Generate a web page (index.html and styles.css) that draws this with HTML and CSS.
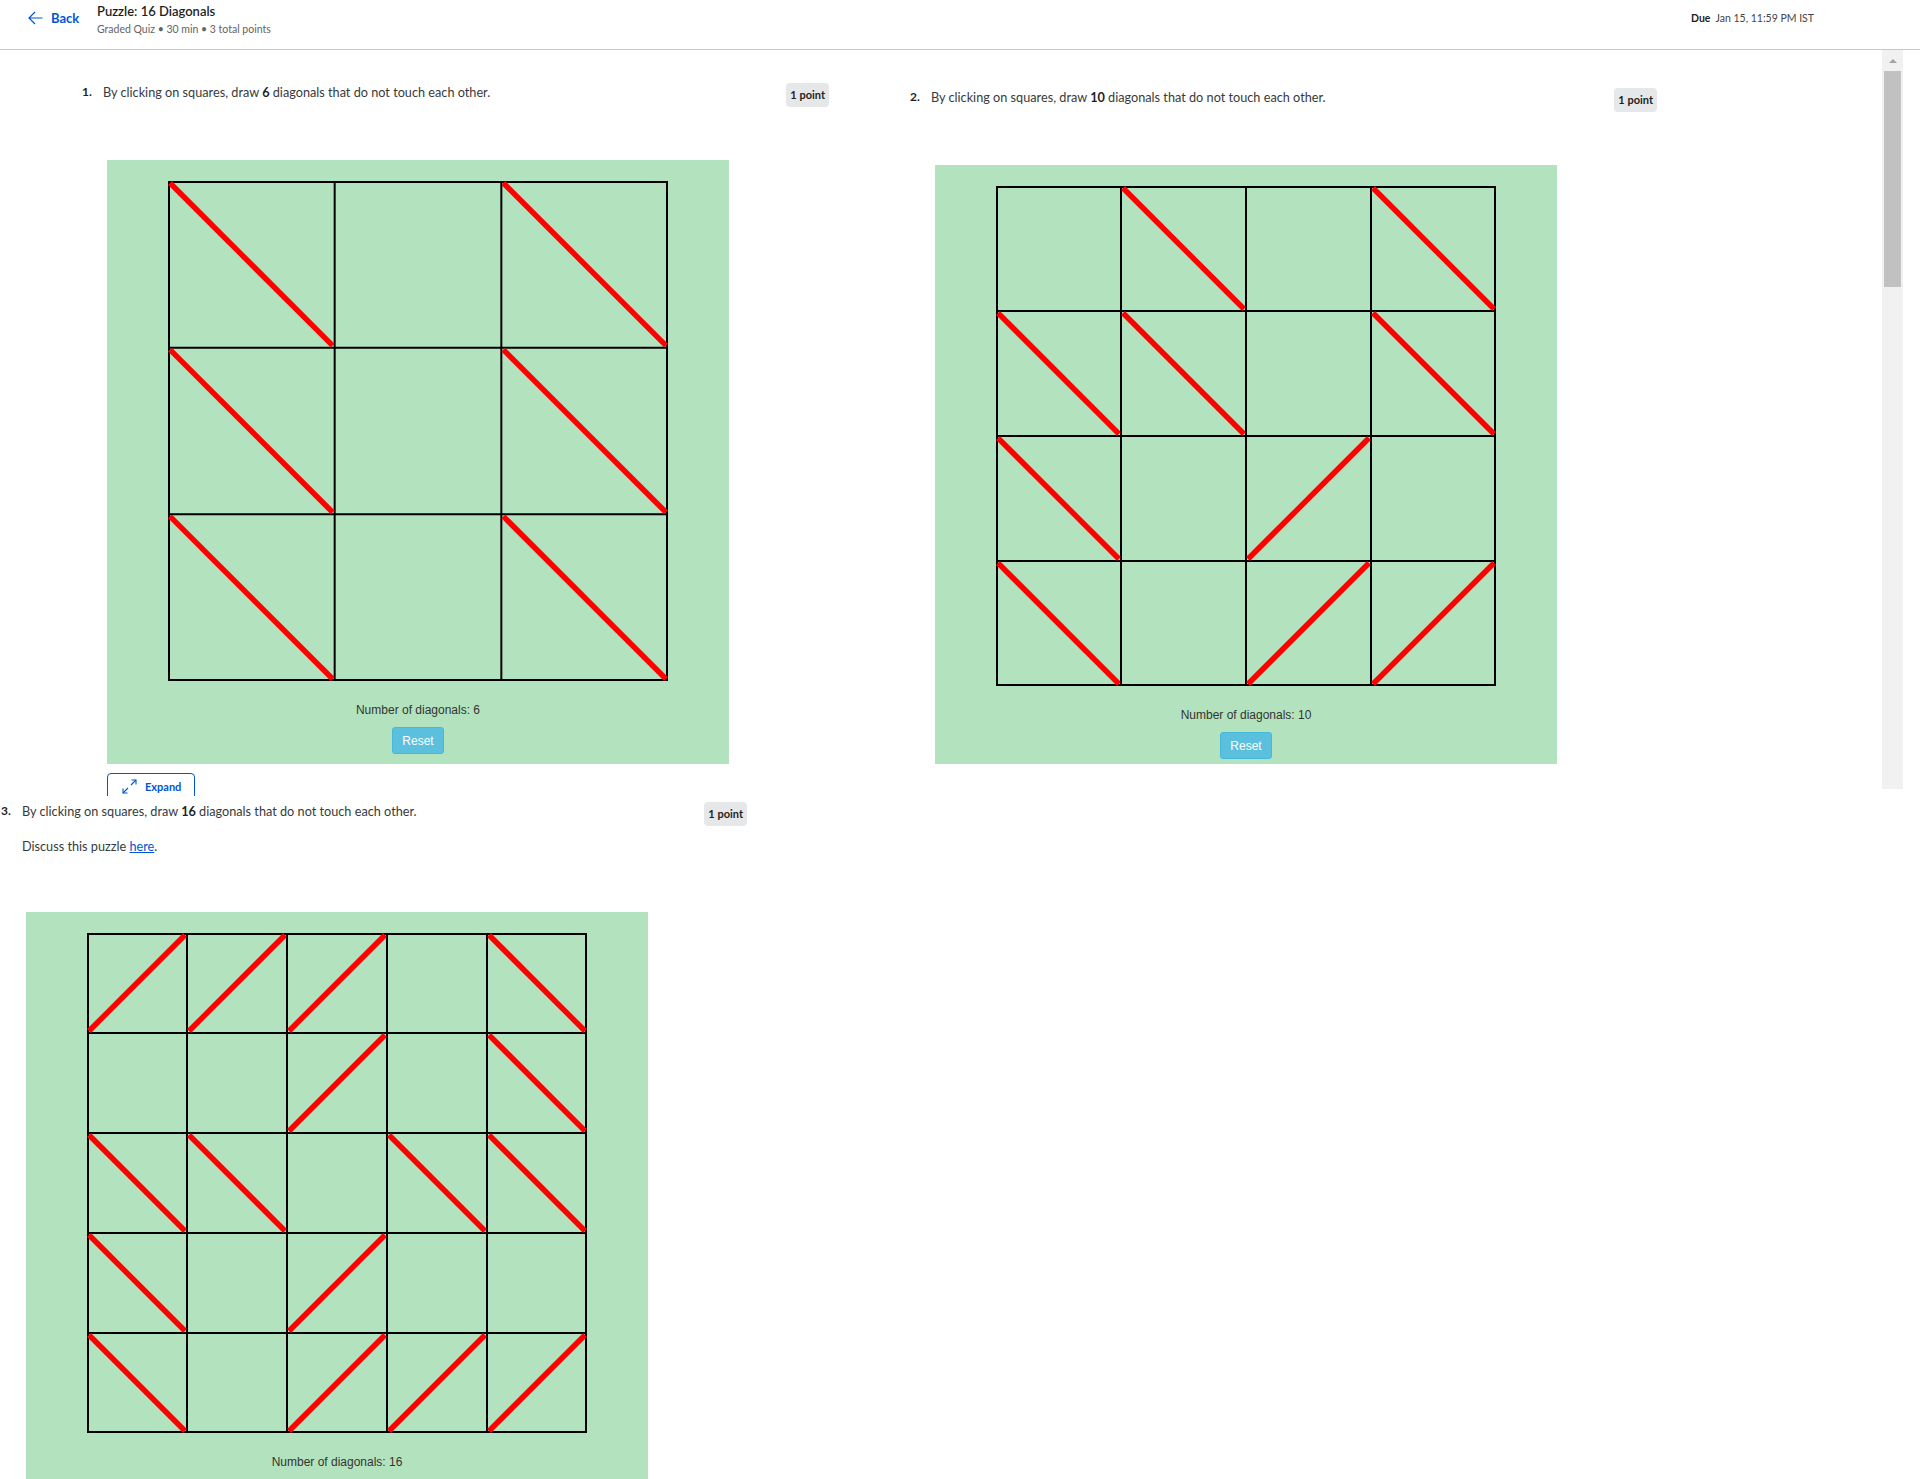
FILE: index.html
```html
<!DOCTYPE html>
<html lang="en">
<head>
<meta charset="utf-8">
<title>Puzzle: 16 Diagonals</title>
<link rel="stylesheet" href="styles.css">
</head>
<body>
<header class="topbar">
  <a class="back" href="#">
    <svg class="back-icon" width="15" height="14" viewBox="0 0 15 14"><path d="M14.5 7H1M7 1L1 7l6 6" fill="none" stroke="#0056d2" stroke-width="1.2"/></svg>
    <span>Back</span>
  </a>
  <div class="titles">
    <div class="title">Puzzle: 16 Diagonals</div>
    <div class="sub">Graded Quiz &bull; 30 min &bull; 3 total points</div>
  </div>
  <div class="due"><b>Due</b>&nbsp; Jan 15, 11:59 PM IST</div>
</header>

<main class="viewport">
  <div class="qrow">
    <section class="question">
      <div class="qhead">
        <span class="num">1.</span>
        <span class="qtext">By clicking on squares, draw <b>6</b> diagonals that do not touch each other.</span>
        <span class="badge">1 point</span>
      </div>
      <div class="board">
        <svg class="grid" width="500" height="500" viewBox="0 0 500 500">
          <g stroke="#000" stroke-width="2" fill="none">
            <rect x="1" y="1" width="498" height="498"/>
            <line x1="166.67" y1="0" x2="166.67" y2="500"/>
            <line x1="333.33" y1="0" x2="333.33" y2="500"/>
            <line x1="0" y1="166.67" x2="500" y2="166.67"/>
            <line x1="0" y1="333.33" x2="500" y2="333.33"/>
          </g>
          <g stroke="#ff0000" stroke-width="5.5">
            <line x1="2" y1="2" x2="164.67" y2="164.67"/>
            <line x1="335.33" y1="2" x2="498" y2="164.67"/>
            <line x1="2" y1="168.67" x2="164.67" y2="331.33"/>
            <line x1="335.33" y1="168.67" x2="498" y2="331.33"/>
            <line x1="2" y1="335.33" x2="164.67" y2="498"/>
            <line x1="335.33" y1="335.33" x2="498" y2="498"/>
          </g>
        </svg>
        <div class="count">Number of diagonals: 6</div>
        <button class="reset">Reset</button>
      </div>
      <button class="expand">
        <svg width="15" height="15" viewBox="0 0 15 15"><g fill="none" stroke="#0056d2" stroke-width="1.1"><path d="M1 14L6 9M9 6L14 1"/><path d="M9.5 1H14v4.5"/><path d="M1 9.5V14h4.5"/></g></svg>
        <span>Expand</span>
      </button>
    </section>

    <section class="question q2">
      <div class="qhead">
        <span class="num">2.</span>
        <span class="qtext">By clicking on squares, draw <b>10</b> diagonals that do not touch each other.</span>
        <span class="badge">1 point</span>
      </div>
      <div class="board board2">
        <svg class="grid" width="500" height="500" viewBox="0 0 500 500">
          <g stroke="#000" stroke-width="2" fill="none">
            <rect x="1" y="1" width="498" height="498"/>
            <line x1="125" y1="0" x2="125" y2="500"/>
            <line x1="250" y1="0" x2="250" y2="500"/>
            <line x1="375" y1="0" x2="375" y2="500"/>
            <line x1="0" y1="125" x2="500" y2="125"/>
            <line x1="0" y1="250" x2="500" y2="250"/>
            <line x1="0" y1="375" x2="500" y2="375"/>
          </g>
          <g stroke="#ff0000" stroke-width="5.5">
            <line x1="127" y1="2" x2="248" y2="123"/>
            <line x1="377" y1="2" x2="498" y2="123"/>
            <line x1="2" y1="127" x2="123" y2="248"/>
            <line x1="127" y1="127" x2="248" y2="248"/>
            <line x1="377" y1="127" x2="498" y2="248"/>
            <line x1="2" y1="252" x2="123" y2="373"/>
            <line x1="2" y1="377" x2="123" y2="498"/>
            <line x1="252" y1="373" x2="373" y2="252"/>
            <line x1="252" y1="498" x2="373" y2="377"/>
            <line x1="377" y1="498" x2="498" y2="377"/>
          </g>
        </svg>
        <div class="count">Number of diagonals: 10</div>
        <button class="reset">Reset</button>
      </div>
    </section>
  </div>

  <div class="vscroll" aria-hidden="true">
    <div class="vscroll-arrow"></div>
    <div class="vscroll-thumb"></div>
  </div>
</main>

<section class="question q3">
  <div class="qhead">
    <span class="num">3.</span>
    <span class="qtext">By clicking on squares, draw <b>16</b> diagonals that do not touch each other.</span>
    <span class="badge">1 point</span>
  </div>
  <p class="discuss">Discuss this puzzle <a href="#">here</a>.</p>
  <div class="board board3">
    <svg class="grid" width="500" height="500" viewBox="0 0 500 500">
      <g stroke="#000" stroke-width="2" fill="none">
        <rect x="1" y="1" width="498" height="498"/>
        <line x1="100" y1="0" x2="100" y2="500"/>
        <line x1="200" y1="0" x2="200" y2="500"/>
        <line x1="300" y1="0" x2="300" y2="500"/>
        <line x1="400" y1="0" x2="400" y2="500"/>
        <line x1="0" y1="100" x2="500" y2="100"/>
        <line x1="0" y1="200" x2="500" y2="200"/>
        <line x1="0" y1="300" x2="500" y2="300"/>
        <line x1="0" y1="400" x2="500" y2="400"/>
      </g>
      <g stroke="#ff0000" stroke-width="5.5">
        <line x1="2" y1="98" x2="98" y2="2"/>
        <line x1="102" y1="98" x2="198" y2="2"/>
        <line x1="202" y1="98" x2="298" y2="2"/>
        <line x1="402" y1="2" x2="498" y2="98"/>
        <line x1="202" y1="198" x2="298" y2="102"/>
        <line x1="402" y1="102" x2="498" y2="198"/>
        <line x1="2" y1="202" x2="98" y2="298"/>
        <line x1="102" y1="202" x2="198" y2="298"/>
        <line x1="302" y1="202" x2="398" y2="298"/>
        <line x1="402" y1="202" x2="498" y2="298"/>
        <line x1="2" y1="302" x2="98" y2="398"/>
        <line x1="202" y1="398" x2="298" y2="302"/>
        <line x1="2" y1="402" x2="98" y2="498"/>
        <line x1="202" y1="498" x2="298" y2="402"/>
        <line x1="302" y1="498" x2="398" y2="402"/>
        <line x1="402" y1="498" x2="498" y2="402"/>
      </g>
    </svg>
    <div class="count">Number of diagonals: 16</div>
  </div>
</section>
</body>
</html>
```

FILE: styles.css
```css
html, body {
  margin: 0;
  padding: 0;
  overflow: hidden;
  background: #ffffff;
}

body {
  font-family: Lato, "Open Sans", sans-serif;
  color: #1f1f1f;
}

/* ---------- top bar ---------- */
.topbar {
  display: flex;
  align-items: flex-start;
  height: 49px;
  border-bottom: 1px solid #c8c8c8;
  padding-left: 28px;
}

.back {
  display: flex;
  align-items: center;
  width: 69px;
  padding-top: 10px;
  line-height: 16px;
  text-decoration: none;
  color: #0056d2;
  font-size: 13px;
  font-weight: 700;
}

.back-icon {
  margin-right: 8px;
}

.titles {
  padding-top: 3px;
}

.title {
  font-size: 13px;
  line-height: 16px;
  font-weight: 600;
  color: #1f1f1f;
}

.sub {
  margin-top: 3px;
  font-size: 10.5px;
  line-height: 14px;
  color: #636363;
}

.due {
  margin-left: auto;
  margin-right: 106px;
  padding-top: 11px;
  font-size: 10.5px;
  line-height: 14px;
  color: #444;
}

.due b {
  color: #1f1f1f;
}

/* ---------- scroll viewport ---------- */
.viewport {
  position: relative;
  width: 1903px;
  height: 746px;
  overflow: hidden;
}

.qrow {
  display: flex;
  align-items: flex-start;
  gap: 81px;
  padding-left: 82px;
}

.question {
  width: 747px;
}

.q2 {
  padding-top: 5px;
}

.qhead {
  display: flex;
  align-items: flex-start;
  padding-top: 33px;
}

.num {
  width: 21px;
  flex: none;
  font-size: 12px;
  font-weight: 700;
  line-height: 18px;
  color: #1f1f1f;
}

.qtext {
  flex: 1;
  font-size: 12.7px;
  line-height: 18px;
  color: #373a3c;
}

.qtext b {
  color: #1f1f1f;
}

.badge {
  flex: none;
  height: 24px;
  line-height: 24px;
  padding: 0 4px;
  border-radius: 4px;
  background: #e6e7e8;
  font-size: 11px;
  font-weight: 700;
  color: #1f1f1f;
}

/* ---------- puzzle board ---------- */
.board {
  box-sizing: border-box;
  display: flex;
  flex-direction: column;
  align-items: center;
  width: 622px;
  height: 604px;
  margin: 53px 0 0 25px;
  padding-top: 21px;
  background: #b3e3be;
  overflow: hidden;
}

.board2 {
  height: 599px;
}

.grid {
  display: block;
  flex: none;
}

.count {
  margin-top: 21px;
  font-family: "Liberation Sans", Arial, sans-serif;
  font-size: 12px;
  line-height: 17px;
  color: #333333;
}

.reset {
  box-sizing: border-box;
  margin-top: 8px;
  width: 52px;
  height: 27px;
  padding: 0;
  border: 1px solid #46b8da;
  border-radius: 3px;
  background: #5bc0de;
  color: #ffffff;
  font-family: "Liberation Sans", Arial, sans-serif;
  font-size: 12px;
  flex: none;
}

.expand {
  box-sizing: border-box;
  display: flex;
  align-items: center;
  gap: 8px;
  width: 88px;
  height: 30px;
  margin: 9px 0 0 25px;
  padding: 0 0 4px 14px;
  border: 1px solid #0056d2;
  border-radius: 4px;
  background: #ffffff;
  color: #0056d2;
  font-family: Lato, "Open Sans", sans-serif;
  font-size: 11px;
  font-weight: 700;
}

/* ---------- fake scrollbar ---------- */
.vscroll {
  position: absolute;
  top: 0;
  right: 0;
  width: 21px;
  height: 739px;
  background: #f1f1f1;
}

.vscroll-arrow {
  width: 0;
  height: 0;
  margin: 9px auto 0;
  border-left: 4px solid transparent;
  border-right: 4px solid transparent;
  border-bottom: 4px solid #a3a3a3;
}

.vscroll-thumb {
  height: 216px;
  margin: 8px 2px 0;
  background: #c1c1c1;
}

/* ---------- question 3 ---------- */
.q3 {
  width: 746px;
  padding-left: 1px;
}

.q3 .qhead {
  padding-top: 6px;
}

.discuss {
  margin: 11px 0 0 21px;
  font-size: 12.7px;
  line-height: 18px;
  color: #373a3c;
}

.discuss a {
  color: #0056d2;
  text-decoration: underline;
}

.board3 {
  height: 568px;
  margin-top: 57px;
}
```
